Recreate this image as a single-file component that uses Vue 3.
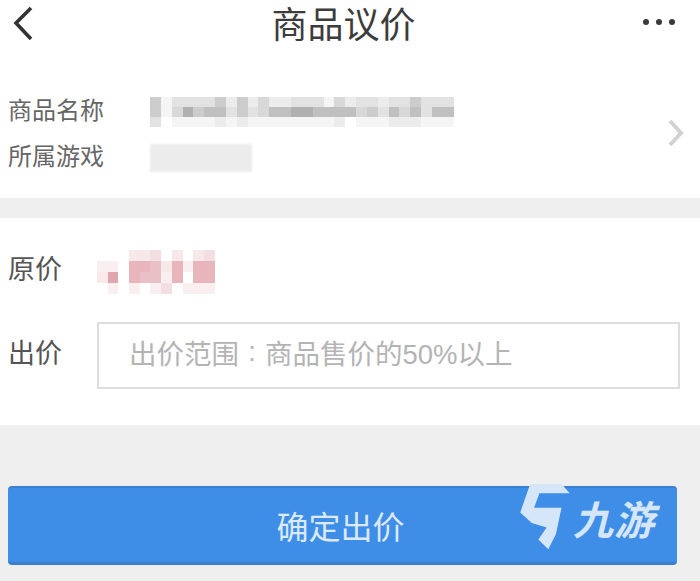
<script setup>
const grays = ['#ffffff', '#f5f5f5', '#ececec', '#e2e2e2', '#d8d8d8', '#cccccc', '#c0c0c0', '#b0b0b0', '#a6a6a6']
const nameRows = [
  '5133335252422333142332335333',
  '5147566353466776666453646366',
  '3011112121111111120111222111'
]
const nameCells = nameRows.join('').split('').map((d) => grays[Number(d)])

const pinks = {
  a: '#ffffff', b: '#f9eff0', c: '#f7e8ea', d: '#f3dfe2',
  e: '#e8c0c6', f: '#e8b5bd', g: '#dfa6ae', h: '#fae9ea'
}
const priceRows = ['aaaccdacacd', 'bbaffecfbff', 'hgafeebfaff', 'abababdabbb']
const priceCells = priceRows.join('').split('').map((k) => pinks[k])
</script>

<template>
  <div class="page">
    <header class="nav">
      <svg class="back" viewBox="0 0 22 36" aria-hidden="true">
        <path d="M19 3 L4 18 L19 34" />
      </svg>
      <h1 class="title">商品议价</h1>
      <div class="more" aria-hidden="true"><i></i><i></i><i></i></div>
    </header>

    <section class="info">
      <div class="info-rows">
        <div class="info-row">
          <span class="info-label">商品名称</span>
          <div class="mosaic name-mosaic">
            <span v-for="(c, i) in nameCells" :key="i" :style="{ background: c }"></span>
          </div>
        </div>
        <div class="info-row">
          <span class="info-label">所属游戏</span>
          <div class="game-blur"></div>
        </div>
      </div>
      <svg class="chevron" viewBox="0 0 18 28" aria-hidden="true">
        <path d="M3 2 L14 14 L3 26" />
      </svg>
    </section>

    <section class="price">
      <div class="price-row original-row">
        <span class="price-label original-label">原价</span>
        <div class="mosaic price-mosaic">
          <span v-for="(c, i) in priceCells" :key="i" :style="{ background: c }"></span>
        </div>
      </div>
      <div class="price-row offer-row">
        <span class="price-label offer-label">出价</span>
        <div class="offer-input">出价范围<span class="colon">:</span>商品售价的50%以上</div>
      </div>
    </section>

    <div class="action">
      <button class="confirm" type="button">确定出价</button>
      <div class="watermark">
        <svg class="wm-mark" viewBox="0 0 150 200" aria-hidden="true">
          <path d="M30 0 H125 L150 28 H58 L42 72 H125 L108 152 L85 198 L55 168 L80 132 L35 118 L0 86 Z" />
        </svg>
        <span class="wm-text">九游</span>
      </div>
    </div>
  </div>
</template>

<style scoped>
.page {
  position: relative;
  width: 700px;
  height: 581px;
  overflow: hidden;
  background: #efefef;
  color: #4a4a4a;
  font-family: "Liberation Sans", "Noto Sans CJK SC", sans-serif;
}

.nav {
  display: grid;
  grid-template-columns: 1fr auto 1fr;
  align-items: center;
  height: 52px;
  padding: 0 25px 0 12px;
  background: #fff;
}

.back {
  width: 22px;
  height: 36px;
  margin-top: -6px;
}

.back path {
  fill: none;
  stroke: #333;
  stroke-width: 3.6;
}

.title {
  margin: 0;
  font-size: 36px;
  font-weight: 400;
  line-height: 52px;
  color: #3c3c3c;
}

.more {
  display: flex;
  justify-self: end;
  gap: 7px;
  margin-top: -8px;
}

.more i {
  display: block;
  width: 6px;
  height: 6px;
  border-radius: 50%;
  background: #3a3a3a;
}

.info {
  display: flex;
  align-items: center;
  justify-content: space-between;
  height: 146px;
  padding: 0 15px 0 8px;
  background: #fff;
}

.info-rows {
  display: flex;
  flex-direction: column;
  gap: 16px;
  margin-top: 20px;
}

.info-row {
  display: flex;
  align-items: center;
  height: 30px;
}

.info-label {
  width: 142px;
  margin-bottom: 8px;
  font-size: 24px;
  color: #666;
}

.mosaic {
  display: grid;
  filter: blur(0.4px);
}

.name-mosaic {
  grid-template-columns: repeat(28, 10.85px);
  grid-auto-rows: 10px;
}

.game-blur {
  width: 102px;
  height: 28px;
  background: #ececec;
  filter: blur(1px);
}

.chevron {
  width: 18px;
  height: 28px;
  margin-top: 16px;
}

.chevron path {
  fill: none;
  stroke: #d2d2d2;
  stroke-width: 4;
}

.price {
  display: flex;
  flex-direction: column;
  box-sizing: border-box;
  height: 207px;
  margin-top: 20px;
  padding: 32px 20px 0 8px;
  background: #fff;
}

.price-row {
  display: flex;
  align-items: center;
}

.original-row {
  height: 44px;
}

.price-label {
  width: 89px;
  font-size: 27px;
  color: #555;
}

.original-label {
  margin-bottom: 10px;
}

.offer-label {
  margin-bottom: 8px;
}

.price-mosaic {
  grid-template-columns: repeat(11, 10.7px);
  grid-auto-rows: 11px;
}

.offer-row {
  margin-top: 28px;
}

.offer-input {
  display: flex;
  align-items: center;
  box-sizing: border-box;
  width: 583px;
  height: 67px;
  padding-left: 30px;
  padding-bottom: 8px;
  border: 2px solid #dedede;
  background: #fff;
  font-size: 27.5px;
  color: #b4b4b4;
}

.colon {
  width: 26px;
  text-align: center;
}

.action {
  padding: 61px 23px 0 8px;
}

.confirm {
  display: block;
  width: 669px;
  height: 79px;
  padding: 0 4px 0 0;
  border: 0;
  border-top: 2px solid #3b7fd0;
  border-bottom: 3px solid #3a7fcd;
  border-radius: 4px;
  background: #3e8de6;
  font-family: inherit;
  font-size: 32px;
  color: #dbe9fa;
}

.watermark {
  position: absolute;
  left: 520px;
  top: 484px;
  display: flex;
  align-items: center;
  gap: 3px;
  color: #d6e6f9;
}

.wm-mark {
  width: 50px;
  height: 66px;
  fill: #d6e6f9;
}

.wm-text {
  margin-top: 8px;
  font-size: 40px;
  font-weight: 700;
  font-style: italic;
  line-height: 1;
  letter-spacing: 1px;
}
</style>
